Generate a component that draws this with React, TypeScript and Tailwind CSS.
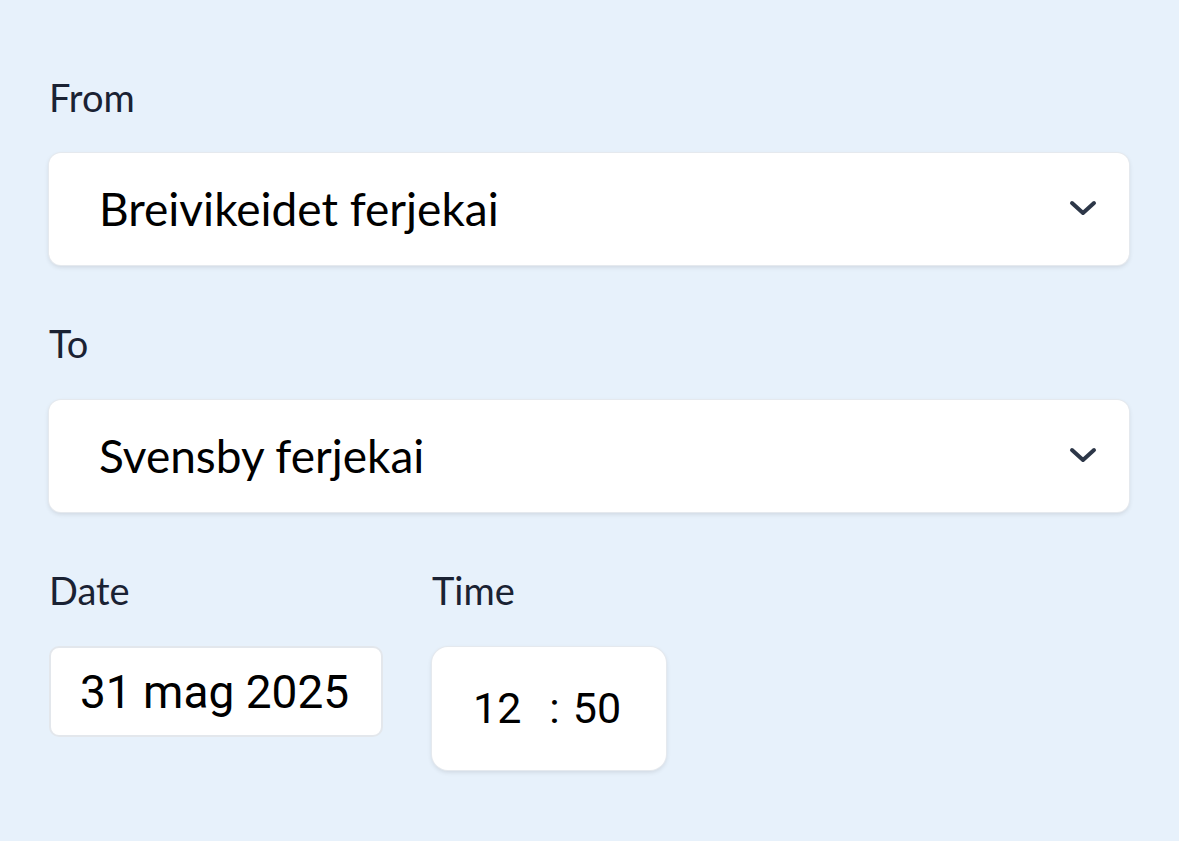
import React from "react";

const Chevron = () => (
  <svg width="28" height="18" viewBox="0 0 28 18" fill="none" className="shrink-0">
    <path d="M3 3 L14 13 L25 3" stroke="#2d3748" strokeWidth="4" strokeLinecap="round" strokeLinejoin="round" />
  </svg>
);

function Select({ value }: { value: string }) {
  return (
    <div className="flex h-[112px] w-[1080px] items-center justify-between rounded-[12px] bg-white pl-[50px] pr-[32px] shadow-[0_2px_5px_rgba(0,0,0,0.12)] ring-1 ring-[#e5e9ee]">
      <span className="text-[46px] leading-none text-black">{value}</span>
      <Chevron />
    </div>
  );
}

export default function App() {
  return (
    <div
      className="min-h-[841px] w-full bg-[#e7f1fb] pl-[49px] pt-[74px]"
      style={{ fontFamily: "Lato, 'Open Sans', sans-serif" }}
    >
      <div className="text-[38px] leading-[46px] text-[#1a2233]">From</div>
      <div className="mt-[33px]">
        <Select value="Breivikeidet ferjekai" />
      </div>
      <div className="mt-[55px] text-[38px] leading-[46px] text-[#1a2233]">To</div>
      <div className="mt-[34px]">
        <Select value="Svensby ferjekai" />
      </div>
      <div className="mt-[55px] flex gap-[49px]">
        <div className="flex w-[334px] flex-col">
          <div className="text-[38px] leading-[46px] text-[#1a2233]">Date</div>
          <div
            className="mt-[33px] flex h-[91px] w-[334px] items-center rounded-[10px] border-2 border-[#e3e7ec] bg-white pl-[29px] text-[46px] leading-none text-black"
            style={{ fontFamily: "Roboto, sans-serif" }}
          >
            31 mag 2025
          </div>
        </div>
        <div className="flex flex-col">
          <div className="text-[38px] leading-[46px] text-[#1a2233]">Time</div>
          <div
            className="mt-[34px] flex h-[123px] w-[234px] items-center rounded-[16px] bg-white pl-[41px] text-[43px] leading-none text-black shadow-[0_2px_5px_rgba(0,0,0,0.12)] ring-1 ring-[#e5e9ee]"
            style={{ fontFamily: "Roboto, sans-serif" }}
          >
            <span>12</span>
            <span className="ml-[28px]">:</span>
            <span className="ml-[13px]">50</span>
          </div>
        </div>
      </div>
    </div>
  );
}
